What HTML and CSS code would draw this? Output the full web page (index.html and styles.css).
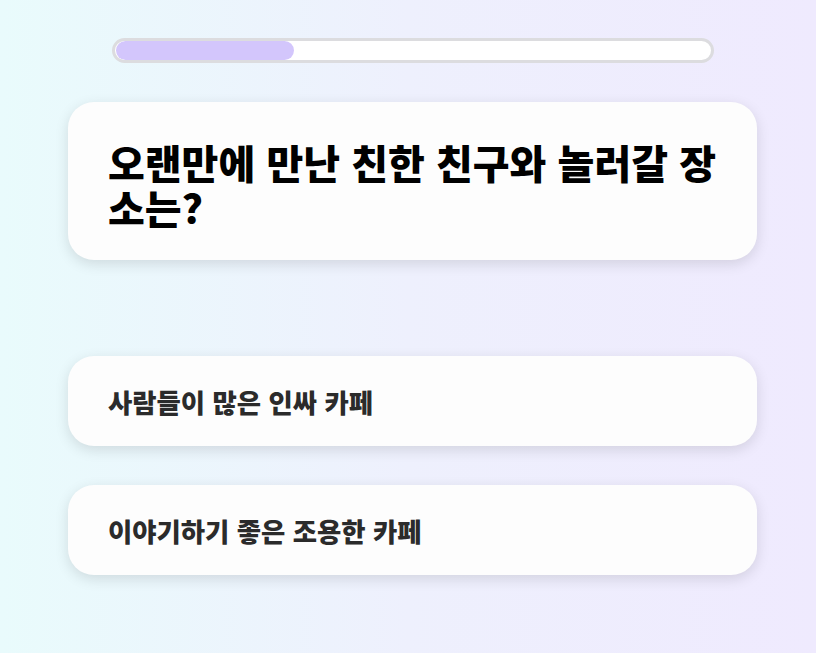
FILE: index.html
```html
<!DOCTYPE html>
<html lang="ko">
<head>
    <meta charset="UTF-8">
    <meta name="viewport" content="width=device-width, initial-scale=1.0">
    <title>테스트</title>
    <link rel="stylesheet" href="styles.css">
</head>
<body>
    <main class="quiz">
        <div class="progress">
            <div class="progress-fill" style="width: 30%"></div>
        </div>

        <section class="question-card">
            <h1 class="question">오랜만에 만난 친한 친구와 놀러갈 장소는?</h1>
        </section>

        <div class="answers">
            <button class="answer">사람들이 많은 인싸 카페</button>
            <button class="answer">이야기하기 좋은 조용한 카페</button>
        </div>
    </main>
</body>
</html>
```

FILE: styles.css
```css
html, body {
    height: 100%;
}

body {
    margin: 0;
    font-family: "Noto Sans CJK KR", "Noto Sans", sans-serif;
    background: linear-gradient(90deg, #e9fbfc 0%, #eef0fd 50%, #efeafe 100%);
}

.quiz {
    width: 689px;
    margin-left: 68px;
    padding-top: 38px;
}

.progress {
    margin: 0 43px 0 44px;
    height: 19px;
    border: 3px solid #dcdcdf;
    border-radius: 20px;
    background-color: #fff;
    padding: 0 2px 0 1px;
    overflow: hidden;
}

.progress-fill {
    height: 100%;
    background-color: #d3c6fc;
    border-radius: 20px;
}

.question-card {
    margin-top: 39px;
    height: 158px;
    box-sizing: border-box;
    padding: 38px 40px 0 40px;
    background-color: #fdfdfd;
    border-radius: 26px;
    box-shadow: 0 4px 14px rgba(0, 0, 0, 0.12);
}

.question {
    margin: 0;
    font-size: 40px;
    font-weight: 900;
    line-height: 45px;
    color: #000;
}

.answers {
    margin-top: 96px;
    display: flex;
    flex-direction: column;
    gap: 39px;
}

.answer {
    height: 90px;
    padding: 0 40px;
    text-align: left;
    background-color: #fdfdfd;
    border: none;
    border-radius: 26px;
    box-shadow: 0 4px 14px rgba(0, 0, 0, 0.12);
    font-family: inherit;
    font-size: 26.4px;
    font-weight: 900;
    color: #2b2b2b;
    cursor: pointer;
}
```
